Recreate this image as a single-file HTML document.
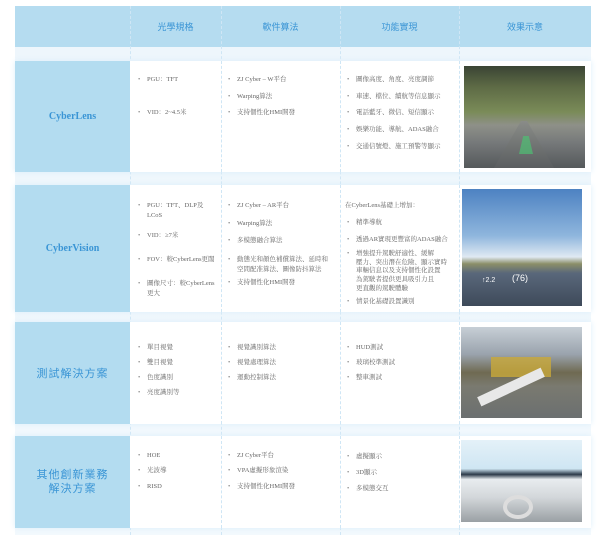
<!DOCTYPE html>
<html><head><meta charset="utf-8"><style>
*{margin:0;padding:0;box-sizing:border-box}
body{width:600px;height:537px;background:#fff;position:relative;overflow:hidden;font-family:"Liberation Serif","Noto Serif CJK SC",serif;color:#666}
.a{position:absolute}
.hd{left:15px;top:6px;width:576px;height:41px;background:#b5dcf0}
.hd span{position:absolute;top:14px;font-family:"Liberation Sans","Noto Sans CJK TC",sans-serif;font-size:9px;color:#3a95d5;text-align:center}
.bg{left:15px;top:47px;width:576px;height:488px;background:linear-gradient(#eef6fc,#f3f9fd)}
.row{position:absolute;left:15px;width:576px;background:#fff;box-shadow:0 0 6px #dbeefa}
.lab{position:absolute;left:0;top:0;bottom:0;width:115px;background:#b3dcf0;display:flex;align-items:center;justify-content:center;text-align:center;color:#3a95d5}
.dl{position:absolute;top:0;bottom:0;border-left:1px dashed #cfe6f5}
.t{position:absolute;font-size:6.5px;line-height:10px;color:#666;white-space:nowrap}
.t:before{content:"•";position:absolute;left:-9px;color:#888}
.n:before{content:""}
.img{position:absolute}
</style></head><body>
<div class="a hd">
<span style="left:115px;width:91px">光學規格</span>
<span style="left:206px;width:119px">軟件算法</span>
<span style="left:325px;width:119px">功能實現</span>
<span style="left:444px;width:132px">效果示意</span>
</div>
<div class="a" style="left:130px;top:6px;height:529px;border-left:1px dashed #cfe6f5"></div>
<div class="a" style="left:221px;top:6px;height:529px;border-left:1px dashed #cfe6f5"></div>
<div class="a" style="left:340px;top:6px;height:529px;border-left:1px dashed #cfe6f5"></div>
<div class="a" style="left:459px;top:6px;height:529px;border-left:1px dashed #cfe6f5"></div>
<div class="a bg" style="z-index:-1"></div>

<!-- Row1 -->
<div class="row" style="top:61px;height:111px">
<div class="lab" style="font-weight:bold;font-size:10px">CyberLens</div>
<div class="dl" style="left:206px"></div><div class="dl" style="left:325px"></div><div class="dl" style="left:444px"></div>
<div class="img" style="left:449px;top:5px;width:121px;height:102px;background:linear-gradient(#3a4434 0%,#5d6a45 20%,#7a8b58 45%,#8e9088 58%,#76797a 75%,#55595b 100%)">
<div class="a" style="left:30px;top:55px;width:60px;height:47px;background:linear-gradient(#8a8c88,#5b5e60);clip-path:polygon(45% 0,55% 0,100% 100%,0 100%)"></div>
<div class="a" style="left:55px;top:70px;width:14px;height:18px;background:#4fbf73;opacity:.7;clip-path:polygon(30% 0,70% 0,100% 100%,0 100%)"></div>
</div>
<div class="t" style="left:132px;top:14px">PGU：TFT</div>
<div class="t" style="left:132px;top:47px">VID：2~4.5米</div>
<div class="t" style="left:222px;top:14px">ZJ Cyber – W平台</div>
<div class="t" style="left:222px;top:31px">Warping算法</div>
<div class="t" style="left:222px;top:47px">支持個性化HMI開發</div>
<div class="t" style="left:341px;top:14px">圖像高度、角度、亮度調節</div>
<div class="t" style="left:341px;top:31px">車速、檔位、續航等信息顯示</div>
<div class="t" style="left:341px;top:47px">電話藍牙、微信、短信顯示</div>
<div class="t" style="left:341px;top:64px">娛樂功能、導航、ADAS融合</div>
<div class="t" style="left:341px;top:81px">交通信號燈、施工預警等顯示</div>
</div>

<!-- Row2 -->
<div class="row" style="top:185px;height:127px">
<div class="lab" style="font-weight:bold;font-size:10px">CyberVision</div>
<div class="dl" style="left:206px"></div><div class="dl" style="left:325px"></div><div class="dl" style="left:444px"></div>
<div class="img" style="left:447px;top:4px;width:120px;height:117px;background:linear-gradient(#4d82c2 0%,#8fb6dd 40%,#dfe9f2 58%,#8c8f68 64%,#59677a 72%,#3e4a5a 100%)">
<div class="a" style="left:20px;top:88px;color:#fff;font-size:7px;font-family:'Liberation Sans',sans-serif">↑2.2</div>
<div class="a" style="left:50px;top:84px;color:#fff;font-size:9px;font-family:'Liberation Sans',sans-serif">(76)</div>
</div>
<div class="t" style="left:132px;top:16px">PGU：TFT、DLP及</div>
<div class="t n" style="left:132px;top:26px">LCoS</div>
<div class="t" style="left:132px;top:46px">VID：≥7米</div>
<div class="t" style="left:132px;top:70px">FOV：較CyberLens更闊</div>
<div class="t" style="left:132px;top:94px">圖像尺寸：較CyberLens</div>
<div class="t n" style="left:132px;top:104px">更大</div>
<div class="t" style="left:222px;top:16px">ZJ Cyber – AR平台</div>
<div class="t" style="left:222px;top:34px">Warping算法</div>
<div class="t" style="left:222px;top:51px">多模態融合算法</div>
<div class="t" style="left:222px;top:70px">動態光和顏色補償算法、延時和</div>
<div class="t n" style="left:222px;top:80px">空間配准算法、圖像防抖算法</div>
<div class="t" style="left:222px;top:93px">支持個性化HMI開發</div>
<div class="t n" style="left:330px;top:16px">在CyberLens基礎上增加：</div>
<div class="t" style="left:341px;top:33px">精準導航</div>
<div class="t" style="left:341px;top:50px">透過AR實現更豐富的ADAS融合</div>
<div class="t" style="left:341px;top:65px;line-height:8.7px">增強提升駕駛舒適性、緩解<br>壓力、突出潛在危險、顯示實時<br>車輛信息以及支持個性化設置<br>為駕駛者提供更具吸引力且<br>更直觀的駕駛體驗</div>
<div class="t" style="left:341px;top:112px">情景化基礎設置識別</div>
</div>

<!-- Row3 -->
<div class="row" style="top:322px;height:102px">
<div class="lab" style="font-family:'Liberation Sans','Noto Sans CJK TC',sans-serif;font-size:11px;letter-spacing:1px">測試解決方案</div>
<div class="dl" style="left:206px"></div><div class="dl" style="left:325px"></div><div class="dl" style="left:444px"></div>
<div class="img" style="left:446px;top:5px;width:121px;height:91px;background:linear-gradient(#c7cfd6 0%,#9aa3ad 30%,#6f6a52 50%,#7a7a70 65%,#6b6f70 100%)">
<div class="a" style="left:30px;top:30px;width:60px;height:20px;background:#c9a93a;opacity:.8"></div>
<div class="a" style="left:15px;top:55px;width:70px;height:10px;background:#e8e8e8;transform:rotate(-25deg)"></div>
</div>
<div class="t" style="left:132px;top:21px">單目視覺</div>
<div class="t" style="left:132px;top:36px">雙目視覺</div>
<div class="t" style="left:132px;top:51px">色度識別</div>
<div class="t" style="left:132px;top:66px">亮度識別等</div>
<div class="t" style="left:222px;top:21px">視覺識別算法</div>
<div class="t" style="left:222px;top:36px">視覺處理算法</div>
<div class="t" style="left:222px;top:51px">運動控制算法</div>
<div class="t" style="left:341px;top:21px">HUD測試</div>
<div class="t" style="left:341px;top:36px">玻璃校準測試</div>
<div class="t" style="left:341px;top:51px">整車測試</div>
</div>

<!-- Row4 -->
<div class="row" style="top:436px;height:92px">
<div class="lab" style="font-family:'Liberation Sans','Noto Sans CJK TC',sans-serif;font-size:11px;letter-spacing:1px;line-height:14px">其他創新業務<br>解決方案</div>
<div class="dl" style="left:206px"></div><div class="dl" style="left:325px"></div><div class="dl" style="left:444px"></div>
<div class="img" style="left:446px;top:4px;width:121px;height:82px;background:linear-gradient(#e4f1f8 0%,#cfe6f3 35%,#2c3a48 42%,#e8ecef 48%,#d3d7da 70%,#9aa0a4 100%)">
<div class="a" style="left:42px;top:55px;width:30px;height:24px;border:4px solid #ddd;border-radius:50%"></div>
</div>
<div class="t" style="left:132px;top:15px">HOE</div>
<div class="t" style="left:132px;top:30px">光波導</div>
<div class="t" style="left:132px;top:46px">RISD</div>
<div class="t" style="left:222px;top:15px">ZJ Cyber平台</div>
<div class="t" style="left:222px;top:30px">VPA虛擬形象渲染</div>
<div class="t" style="left:222px;top:46px">支持個性化HMI開發</div>
<div class="t" style="left:341px;top:16px">虛擬顯示</div>
<div class="t" style="left:341px;top:32px">3D顯示</div>
<div class="t" style="left:341px;top:48px">多模態交互</div>
</div>
</body></html>
